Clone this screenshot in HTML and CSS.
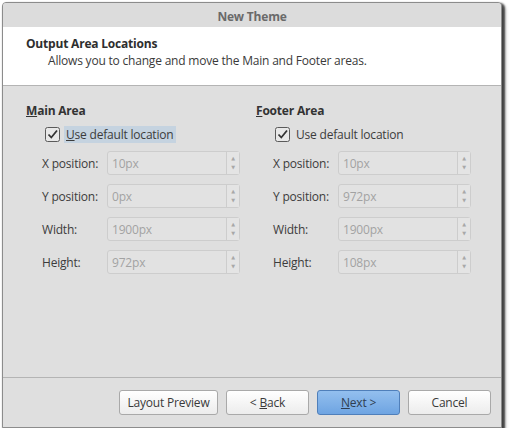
FILE: index.html
```html
<!DOCTYPE html>
<html>
<head>
<meta charset="utf-8">
<link rel="stylesheet" href="styles.css">
</head>
<body>
<div class="window">
  <div class="titlebar">New Theme</div>
  <div class="header">
    <div class="h-title">Output Area Locations</div>
    <div class="h-sub">Allows you to change and move the Main and Footer areas.</div>
  </div>
  <div class="content">
    <div class="group">
      <div class="g-title"><u>M</u>ain Area</div>
      <div class="check-row">
        <svg class="cb" width="15" height="15" viewBox="0 0 15 15"><rect x="0.5" y="0.5" width="14" height="14" rx="2" fill="#e8e8e8" stroke="#5a5a5a"/><path d="M3.5 7.5 L6.3 10.5 L12 3.5" fill="none" stroke="#333" stroke-width="1.8"/></svg>
        <span class="cb-label focus"><u>U</u>se default location</span>
      </div>
      <div class="fields">
        <span class="lbl">X position:</span><div class="spin"><span class="val">10px</span><span class="arrows"><i>&#9650;</i><i>&#9660;</i></span></div>
        <span class="lbl">Y position:</span><div class="spin"><span class="val">0px</span><span class="arrows"><i>&#9650;</i><i>&#9660;</i></span></div>
        <span class="lbl">Width:</span><div class="spin"><span class="val">1900px</span><span class="arrows"><i>&#9650;</i><i>&#9660;</i></span></div>
        <span class="lbl">Height:</span><div class="spin"><span class="val">972px</span><span class="arrows"><i>&#9650;</i><i>&#9660;</i></span></div>
      </div>
    </div>
    <div class="group">
      <div class="g-title"><u>F</u>ooter Area</div>
      <div class="check-row">
        <svg class="cb" width="15" height="15" viewBox="0 0 15 15"><rect x="0.5" y="0.5" width="14" height="14" rx="2" fill="#e8e8e8" stroke="#5a5a5a"/><path d="M3.5 7.5 L6.3 10.5 L12 3.5" fill="none" stroke="#333" stroke-width="1.8"/></svg>
        <span class="cb-label">Use default location</span>
      </div>
      <div class="fields">
        <span class="lbl">X position:</span><div class="spin"><span class="val">10px</span><span class="arrows"><i>&#9650;</i><i>&#9660;</i></span></div>
        <span class="lbl">Y position:</span><div class="spin"><span class="val">972px</span><span class="arrows"><i>&#9650;</i><i>&#9660;</i></span></div>
        <span class="lbl">Width:</span><div class="spin"><span class="val">1900px</span><span class="arrows"><i>&#9650;</i><i>&#9660;</i></span></div>
        <span class="lbl">Height:</span><div class="spin"><span class="val">108px</span><span class="arrows"><i>&#9650;</i><i>&#9660;</i></span></div>
      </div>
    </div>
  </div>
  <div class="footer">
    <button class="btn btn-wide">Layout Preview</button>
    <button class="btn">&lt; <u>B</u>ack</button>
    <button class="btn primary"><u>N</u>ext &gt;</button>
    <button class="btn">Cancel</button>
  </div>
</div>
</body>
</html>
```

FILE: styles.css
```css
html, body {
  margin: 0;
  padding: 0;
  background: #ffffff;
}
body {
  font-family: "Open Sans", "DejaVu Sans", sans-serif;
  font-size: 12px;
  letter-spacing: -0.2px;
  color: #3c3c3c;
}
.window {
  margin: 2px 0 0 2px;
  width: 500px;
  height: 426px;
  box-sizing: border-box;
  border: 1px solid #8c8c8c;
  border-radius: 4px 4px 0 0;
  box-shadow: 2px 2px 2px 1px rgba(0,0,0,0.65), 3px 4px 4px rgba(0,0,0,0.3);
  background: #dfdfdf;
  display: flex;
  flex-direction: column;
  overflow: hidden;
}
.titlebar {
  height: 24px;
  line-height: 28px;
  background: #dcdcdc;
  text-align: center;
  font-weight: bold;
  color: #6a6a6a;
}
.header {
  background: #ffffff;
  height: 59px;
  box-sizing: border-box;
  padding: 9px 0 0 23px;
  border-bottom: 1px solid #b4b4b4;
}
.h-title {
  font-weight: bold;
  color: #2e2e2e;
  line-height: 16px;
}
.h-sub {
  padding-left: 22px;
  line-height: 17px;
  color: #3a3a3a;
}
.content {
  flex: 1;
  display: flex;
  padding: 17px 0 0 23px;
  border-bottom: 1px solid #b4b4b4;
}
.group {
  width: 230px;
}
.group + .group .fields {
  margin-left: 17px;
}
.g-title {
  font-weight: bold;
  line-height: 16px;
  color: #333;
}
.check-row {
  display: flex;
  align-items: center;
  margin: 7px 0 0 19px;
  height: 17px;
}
.cb {
  display: block;
  margin-right: 4px;
}
.cb-label {
  padding: 0 3px 0 2px;
  line-height: 17px;
}
.cb-label.focus {
  background: #c5d3e0;
}
.fields {
  display: grid;
  grid-template-columns: 65px 133px;
  grid-auto-rows: 24px;
  row-gap: 9px;
  margin: 8px 0 0 16px;
  align-items: center;
}
.lbl {
  color: #3c3c3c;
}
.spin {
  height: 24px;
  box-sizing: border-box;
  border: 1px solid #cdcdcd;
  border-radius: 3px;
  background: #e2e2e2;
  display: flex;
  align-items: stretch;
}
.val {
  flex: 1;
  color: #a2a2a2;
  padding-left: 4px;
  line-height: 23px;
}
.arrows {
  width: 12px;
  border-left: 1px solid #cdcdcd;
  display: flex;
  flex-direction: column;
  justify-content: center;
  align-items: center;
  background: #e4e4e4;
}
.arrows i {
  font-style: normal;
  font-size: 5px;
  line-height: 9px;
  color: #a8a8a8;
}
.footer {
  height: 49px;
  box-sizing: border-box;
  display: flex;
  justify-content: flex-end;
  gap: 8px;
  padding: 12px 10px 0 0;
}
.btn {
  width: 83px;
  height: 25px;
  box-sizing: border-box;
  font-family: inherit;
  font-size: 12px;
  letter-spacing: -0.2px;
  color: #3a3a3a;
  background: linear-gradient(#ffffff, #ececec);
  border: 1px solid #a9a9a9;
  border-radius: 3px;
  padding: 0;
  line-height: 22px;
}
.btn-wide {
  width: 99px;
}
.btn.primary {
  background: linear-gradient(#93bfee, #6ea4e2);
  border-color: #4f7fba;
  color: #2f3d50;
}
```
